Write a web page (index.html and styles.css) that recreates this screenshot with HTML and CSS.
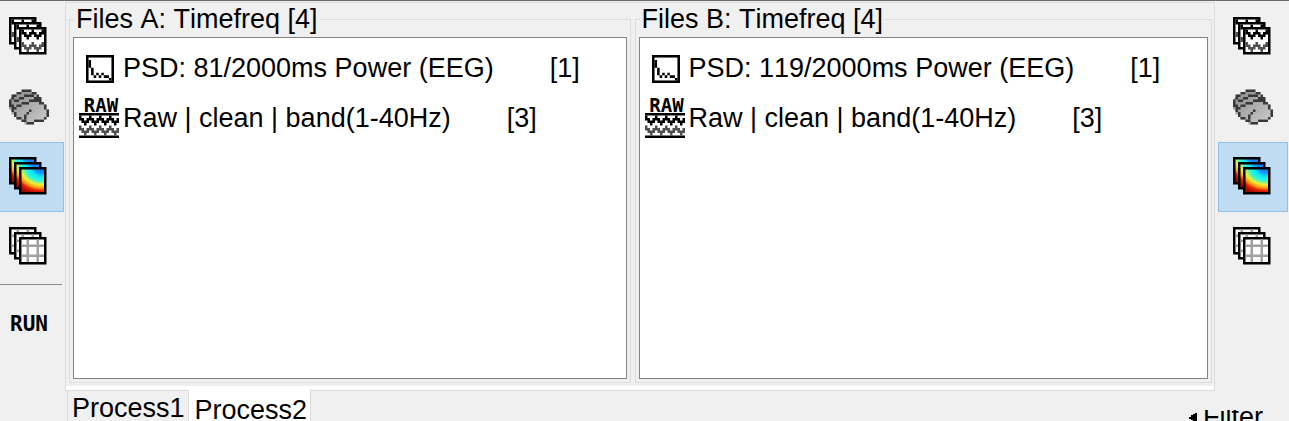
FILE: index.html
```
<!DOCTYPE html>
<html lang="en">
<head>
  <meta charset="UTF-8">
  <meta name="viewport" content="width=device-width, initial-scale=1.0">
  <title>Process2</title>
  <link rel="stylesheet" href="styles.css">
</head>
<body>
  <!-- Shared icons, drawn on a 16x16 grid -->
  <svg class="defs" aria-hidden="true">
    <defs>
      <radialGradient id="jet" gradientUnits="userSpaceOnUse" cx="0" cy="0" r="1" gradientTransform="translate(9 0) scale(13 11)">
        <stop offset="0" stop-color="#1668e8"/>
        <stop offset="0.2" stop-color="#1a8cff"/>
        <stop offset="0.34" stop-color="#0ee6f8"/>
        <stop offset="0.5" stop-color="#30f8d8"/>
        <stop offset="0.64" stop-color="#f0f030"/>
        <stop offset="0.76" stop-color="#ff9a10"/>
        <stop offset="0.86" stop-color="#e82000"/>
        <stop offset="1" stop-color="#a00800"/>
      </radialGradient>
      <linearGradient id="cortex" x1="0" y1="0" x2="1" y2="1">
        <stop offset="0" stop-color="#888"/>
        <stop offset="1" stop-color="#d0d0d0"/>
      </linearGradient>

      <g id="wave-box">
        <path d="M0 0h11v11h-11z"/>
        <path fill="#fff" d="M1 1h9v9h-9z"/>
        <path d="M1 1h1v1h-1zM5 1h1v1h-1zM9 1h1v1h-1zM1 2h2v1h-2zM4 2h3v1h-3zM8 2h2v1h-2zM2 3h3v1h-3zM6 3h3v1h-3zM3 4h1v1h-1zM7 4h1v1h-1z"/>
        <path fill="#505050" d="M1 6h1v1h-1zM5 6h1v1h-1zM9 6h1v1h-1zM1 7h2v1h-2zM4 7h3v1h-3zM8 7h2v1h-2zM2 8h3v1h-3zM6 8h3v1h-3zM3 9h1v1h-1zM7 9h1v1h-1z"/>
      </g>
      <g id="map-box">
        <path d="M0 0h11v11h-11z"/>
        <path fill="url(#jet)" d="M1 1h9v9h-9z"/>
      </g>
      <g id="grid-box">
        <path d="M0 0h11v11h-11z"/>
        <path fill="#fff" d="M1 1h9v9h-9z"/>
        <path fill="#a0a0a0" d="M3 1h1v9h-1zM7 1h1v9h-1zM1 3h9v1h-9zM1 7h9v1h-9z"/>
      </g>

      <symbol id="icon-data" viewBox="0 0 16 16">
        <use href="#wave-box"/>
        <use href="#wave-box" x="2" y="2"/>
        <use href="#wave-box" x="4" y="4"/>
      </symbol>
      <symbol id="icon-timefreq" viewBox="0 0 16 16">
        <use href="#map-box"/>
        <use href="#map-box" x="2" y="2"/>
        <use href="#map-box" x="4" y="4"/>
      </symbol>
      <symbol id="icon-matrix" viewBox="0 0 16 16">
        <use href="#grid-box"/>
        <use href="#grid-box" x="2" y="2"/>
        <use href="#grid-box" x="4" y="4"/>
      </symbol>
      <symbol id="icon-sources" viewBox="0 -1 16 16">
        <path fill="url(#cortex)" d="M1 3h1v-1h3v-1h4v1h2v1h1v1h1v1h1v1h1v2h1v3h-1v1h-5v1h-1v1h-3v-1h-1v-1h-2v-1h-1v-1h-1v-2h-1v-2h-1z"/>
        <path fill="#383838" d="M5 0h4v1h-4zM3 1h2v1h-2zM9 1h2v1h-2zM1 2h2v1h-2zM11 2h1v1h-1zM0 4h1v3h-1zM1 3h1v1h-1zM1 6h1v3h-1zM2 9h1v2h-1zM3 11h2v1h-2zM5 12h2v1h-2zM7 13h3v1h-3zM10 12h4v1h-4zM14 11h1v1h-1zM15 8h1v3h-1zM14 6h1v2h-1zM13 5h1v1h-1zM12 3h1v2h-1z"/>
        <path fill="#383838" d="M6 2h4v1h-4zM4 3h2v1h-2zM2 4h2v1h-2zM10 3h2v1h-2zM8 4h3v1h-3zM5 5h3v1h-3zM3 6h2v1h-2zM2 7h1v1h-1zM11 4h1v1h-1zM12 5h1v1h-1zM8 8h1v1h-1zM7 9h1v1h-1zM6 10h1v2h-1z"/>
      </symbol>
      <symbol id="icon-psd" viewBox="0 0 11 11">
        <path d="M0 0h11v11h-11z"/>
        <path fill="#fff" d="M1 1h9v9h-9z"/>
        <path d="M1 2h1v3h-1zM2 5h1v3h-1zM3 8h1v1h-1zM4 7h1v1h-1zM5 8h1v1h-1zM6 7h1v1h-1zM7 8h2v1h-2zM9 9h1v1h-1z"/>
      </symbol>
      <symbol id="icon-raw" viewBox="0 0 16 10">
        <path d="M0 0h16v1h-16zM0 9h16v1h-16z"/>
        <path d="M0 1h1v1h-1zM4 1h1v1h-1zM8 1h1v1h-1zM12 1h1v1h-1zM0 2h2v1h-2zM3 2h3v1h-3zM7 2h3v1h-3zM11 2h3v1h-3zM15 2h1v1h-1zM1 3h3v1h-3zM5 3h3v1h-3zM9 3h3v1h-3zM13 3h3v1h-3zM2 4h1v1h-1zM6 4h1v1h-1zM10 4h1v1h-1zM14 4h1v1h-1z"/>
        <path fill="#505050" d="M0 5h1v1h-1zM4 5h1v1h-1zM8 5h1v1h-1zM12 5h1v1h-1zM0 6h2v1h-2zM3 6h3v1h-3zM7 6h3v1h-3zM11 6h3v1h-3zM15 6h1v1h-1zM1 7h3v1h-3zM5 7h3v1h-3zM9 7h3v1h-3zM13 7h3v1h-3zM2 8h1v1h-1zM6 8h1v1h-1zM10 8h1v1h-1zM14 8h1v1h-1z"/>
      </symbol>
    </defs>
  </svg>

  <div class="app">
    <nav class="toolbar toolbar-a" aria-label="Files A">
      <button type="button" class="tool" aria-label="Recordings"><svg class="icon"><use href="#icon-data"/></svg></button>
      <button type="button" class="tool" aria-label="Sources"><svg class="icon"><use href="#icon-sources"/></svg></button>
      <button type="button" class="tool selected" aria-label="Time-frequency" aria-pressed="true"><svg class="icon"><use href="#icon-timefreq"/></svg></button>
      <button type="button" class="tool" aria-label="Matrix"><svg class="icon"><use href="#icon-matrix"/></svg></button>
      <hr class="separator">
      <button type="button" class="tool run">RUN</button>
    </nav>

    <main class="panel">
      <fieldset class="group">
        <legend>Files A: Timefreq [4]</legend>
        <ul class="files">
          <li class="file">
            <span class="file-icon"><svg class="psd"><use href="#icon-psd"/></svg></span>
            <span>PSD: 81/2000ms Power (EEG)</span>
            <span class="count">[1]</span>
          </li>
          <li class="file">
            <span class="file-icon"><span class="raw-label">RAW</span><svg class="raw-wave"><use href="#icon-raw"/></svg></span>
            <span>Raw | clean | band(1-40Hz)</span>
            <span class="count">[3]</span>
          </li>
        </ul>
      </fieldset>

      <fieldset class="group">
        <legend>Files B: Timefreq [4]</legend>
        <ul class="files">
          <li class="file">
            <span class="file-icon"><svg class="psd"><use href="#icon-psd"/></svg></span>
            <span>PSD: 119/2000ms Power (EEG)</span>
            <span class="count">[1]</span>
          </li>
          <li class="file">
            <span class="file-icon"><span class="raw-label">RAW</span><svg class="raw-wave"><use href="#icon-raw"/></svg></span>
            <span>Raw | clean | band(1-40Hz)</span>
            <span class="count">[3]</span>
          </li>
        </ul>
      </fieldset>
    </main>

    <nav class="toolbar toolbar-b" aria-label="Files B">
      <button type="button" class="tool" aria-label="Recordings"><svg class="icon"><use href="#icon-data"/></svg></button>
      <button type="button" class="tool" aria-label="Sources"><svg class="icon"><use href="#icon-sources"/></svg></button>
      <button type="button" class="tool selected" aria-label="Time-frequency" aria-pressed="true"><svg class="icon"><use href="#icon-timefreq"/></svg></button>
      <button type="button" class="tool" aria-label="Matrix"><svg class="icon"><use href="#icon-matrix"/></svg></button>
    </nav>

    <footer class="bottom">
      <div class="tabs" role="tablist">
        <button type="button" class="tab" role="tab" aria-selected="false">Process1</button>
        <button type="button" class="tab active" role="tab" aria-selected="true">Process2</button>
      </div>
      <button type="button" class="filter">
        <svg class="arrow" viewBox="0 0 8 10"><path d="M6 0h2v10h-2v-1h-2v-2h-2v-1h-2v-2h2v-2h2v-1h2z"/></svg>
        Filter
      </button>
    </footer>
  </div>
</body>
</html>
```
FILE: styles.css
```
/* General Styling */
* {
  box-sizing: border-box;
}

body {
  margin: 0;
  font-family: "Liberation Sans", Arial, sans-serif;
  font-size: 27px;
  font-kerning: none;
  line-height: 30px;
  color: #000;
  background: #f0f0f0;
}

button {
  margin: 0;
  padding: 0;
  border: none;
  background: none;
  font: inherit;
  font-kerning: none;
  color: inherit;
}

svg {
  display: block;
}

.defs {
  position: absolute;
  width: 0;
  height: 0;
}

.app {
  display: grid;
  grid-template-columns: 65px 1fr 74px;
  grid-template-rows: 1fr 30px;
  height: 100vh;
  border-top: 1px solid #6b6868;
  overflow: hidden;
}

/* Toolbars */
.toolbar {
  display: flex;
  flex-direction: column;
  padding-top: 1px;
}

.toolbar-a {
  grid-row: 1 / 3;
  align-items: flex-end;
  padding-right: 1px;
  overflow: hidden;
}

.toolbar-b {
  padding-left: 3px;
}

.tool {
  display: flex;
  flex: none;
  align-items: center;
  justify-content: center;
  width: 70px;
  height: 70px;
  border: 1px solid transparent;
}

.tool.selected {
  background: #c0dcf3;
  border-color: #90c0e8;
}

.icon {
  width: 40px;
  height: 40px;
}

.separator {
  align-self: stretch;
  margin: 2px 2px 4px 0;
  border: none;
  border-top: 1px solid #8c8c8c;
}

.run {
  font-family: "DejaVu Sans Mono", monospace;
  font-size: 21px;
  font-weight: bold;
}

/* File lists */
.panel {
  display: grid;
  grid-template-columns: 562fr 578fr;
  gap: 4px;
  margin-top: 1px;
  padding: 1px 2px 7px 3px;
  border: 1px solid #dcdcdc;
  box-shadow: inset 0 -4px #fff;
}

.group {
  display: flex;
  flex-direction: column;
  min-width: 0;
  margin: 0;
  padding: 3px;
  border: 1px solid #dcdcdc;
}

.group legend {
  margin-left: 1px;
  padding: 0 2px;
}

.files {
  flex: 1;
  margin: 0;
  padding: 5px;
  list-style: none;
  background: #fff;
  border: 1px solid #828282;
}

.file {
  display: flex;
  align-items: center;
  height: 50px;
  white-space: nowrap;
}

.file-icon {
  display: flex;
  flex-direction: column;
  align-items: center;
  justify-content: center;
  width: 40px;
  height: 40px;
  margin-right: 4px;
}

.psd {
  width: 28px;
  height: 28px;
  margin: 2px 0 0 2px;
}

.raw-label {
  padding-left: 4px;
  font-family: "DejaVu Sans Mono", monospace;
  font-size: 19px;
  font-weight: bold;
  line-height: 15px;
}

.raw-wave {
  width: 40px;
  height: 25px;
}

.count {
  margin-left: 56px;
}

/* Bottom bar */
.bottom {
  grid-column: 2 / 4;
  display: flex;
  justify-content: space-between;
  padding: 0 26px 0 2px;
}

.tabs {
  display: flex;
}

.tab {
  height: 30px;
  padding: 2px 3px 0 4px;
  border: 1px solid #dcdcdc;
  border-width: 0 1px;
  line-height: 30px;
}

.tab.active {
  position: relative;
  height: 34px;
  margin-top: -2px;
  padding: 6px 3px 0 6px;
  background: #fff;
  border-left: none;
}

.filter {
  display: flex;
  gap: 6px;
  height: 14px;
  margin-top: 19px;
  line-height: 14px;
  overflow: hidden;
}

.arrow {
  width: 8px;
  height: 10px;
  margin-top: 3px;
}
```
